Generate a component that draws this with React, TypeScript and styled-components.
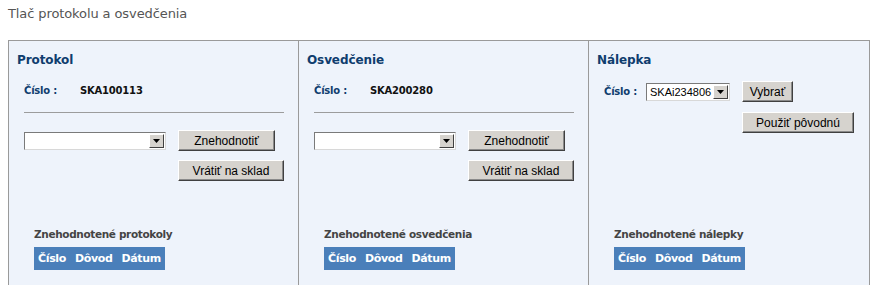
import React from "react";
import styled, { createGlobalStyle } from "styled-components";

const Global = createGlobalStyle`
  html, body { margin: 0; padding: 0; background: #ffffff; overflow: hidden; }
  body { padding: 6px 8px 0 8px; font-family: "DejaVu Sans", Verdana, sans-serif; }
`;

const Title = styled.div`
  font-size: 13px;
  color: #555555;
  height: 34px;
  line-height: 16px;
  letter-spacing: -0.1px;
`;

const Panel = styled.div`
  display: grid;
  grid-template-columns: 290px 290px 1fr;
  width: 862px;
  height: 245px;
  border: 1px solid #9a9a9a;
  border-bottom: none;
  background: #eef3fb;
  box-sizing: border-box;
`;

const Column = styled.div<{ $last?: boolean }>`
  position: relative;
  display: flex;
  flex-direction: column;
  padding: 11px 14px 0 8px;
  border-right: ${(p) => (p.$last ? "none" : "1px solid #9a9a9a")};
`;

const Heading = styled.div`
  font-size: 12px;
  font-weight: bold;
  color: #0f3d6e;
  line-height: 16px;
  letter-spacing: -0.1px;
  height: 30px;
`;

const NumberRow = styled.div`
  display: flex;
  align-items: center;
  padding-left: 7px;
  height: 16px;
  font-size: 10px;
  font-weight: bold;
  letter-spacing: -0.2px;
`;

const Label = styled.span`
  color: #0f3d6e;
  width: 56px;
`;

const Value = styled.span`
  color: #111111;
`;

const Rule = styled.div`
  margin: 14px 0 0 7px;
  height: 1px;
  background: #9c9c9c;
`;

const ActionsGrid = styled.div`
  display: grid;
  grid-template-columns: 142px auto;
  column-gap: 12px;
  row-gap: 9px;
  margin-top: 17px;
  padding-left: 7px;
  align-items: center;
`;

const Select = styled.div<{ $width: number }>`
  display: flex;
  width: ${(p) => p.$width}px;
  height: 18px;
  box-sizing: border-box;
  border: 1px solid;
  border-color: #7a7a7a #d8d8d8 #d8d8d8 #7a7a7a;
  background: #ffffff;
  font-family: "Liberation Sans", Arial, sans-serif;
  font-size: 11px;
  line-height: 16px;
  color: #000;
`;

const SelectText = styled.div`
  flex: 1;
  padding-left: 3px;
  overflow: hidden;
  white-space: nowrap;
`;

const Arrow = styled.div`
  width: 15px;
  height: 14px;
  margin: 1px;
  box-sizing: border-box;
  background: #d6d3ce;
  border: 1px solid;
  border-color: #ffffff #404040 #404040 #ffffff;
  display: flex;
  align-items: center;
  justify-content: center;
`;

const Button = styled.button<{ $width: number }>`
  width: ${(p) => p.$width}px;
  height: 21px;
  padding: 0;
  margin: 0;
  background: #d6d3ce;
  border: 1px solid;
  border-color: #ffffff #404040 #404040 #ffffff;
  box-shadow: inset -1px -1px 0 #8a8a8a;
  font-family: "Liberation Sans", Arial, sans-serif;
  font-size: 12px;
  color: #000;
  justify-self: start;
`;

const Spacer = styled.div``;

const Footer = styled.div`
  position: absolute;
  left: 25px;
  top: 186px;
`;

const SubTitle = styled.div`
  font-size: 10.5px;
  font-weight: bold;
  color: #444444;
  letter-spacing: -0.35px;
  line-height: 14px;
  margin-bottom: 6px;
`;

const HeaderRow = styled.div`
  display: inline-flex;
  gap: 9px;
  background: #4a7fba;
  padding: 0 4px;
  height: 23px;
  align-items: center;
  font-size: 11px;
  font-weight: bold;
  color: #ffffff;
  letter-spacing: -0.35px;
`;

const ArrowIcon = () => (
  <svg width="7" height="4" viewBox="0 0 7 4">
    <polygon points="0,0 7,0 3.5,4" fill="#000" />
  </svg>
);

const DropDown = ({ width, text }: { width: number; text?: string }) => (
  <Select $width={width}>
    <SelectText>{text}</SelectText>
    <Arrow>
      <ArrowIcon />
    </Arrow>
  </Select>
);

const Table = ({ title }: { title: string }) => (
  <Footer>
    <SubTitle>{title}</SubTitle>
    <HeaderRow>
      <span>Číslo</span>
      <span>Dôvod</span>
      <span>Dátum</span>
    </HeaderRow>
  </Footer>
);

const InvalidateColumn = ({
  heading,
  number,
  tableTitle,
}: {
  heading: string;
  number: string;
  tableTitle: string;
}) => (
  <Column>
    <Heading>{heading}</Heading>
    <NumberRow>
      <Label>Číslo :</Label>
      <Value>{number}</Value>
    </NumberRow>
    <Rule />
    <ActionsGrid>
      <DropDown width={142} />
      <Button $width={97}>Znehodnotiť</Button>
      <Spacer />
      <Button $width={106}>Vrátiť na sklad</Button>
    </ActionsGrid>
    <Table title={tableTitle} />
  </Column>
);

const StickerRow = styled.div`
  display: grid;
  grid-template-columns: 42px 96px auto;
  row-gap: 10px;
  padding-left: 7px;
  margin-top: -1px;
  align-items: center;
`;

const StickerLabel = styled.span`
  font-size: 10px;
  font-weight: bold;
  color: #0f3d6e;
  letter-spacing: -0.2px;
`;

export default function App() {
  return (
    <>
      <Global />
      <Title>Tlač protokolu a osvedčenia</Title>
      <Panel>
        <InvalidateColumn heading="Protokol" number="SKA100113" tableTitle="Znehodnotené protokoly" />
        <InvalidateColumn heading="Osvedčenie" number="SKA200280" tableTitle="Znehodnotené osvedčenia" />
        <Column $last>
          <Heading>Nálepka</Heading>
          <StickerRow>
            <StickerLabel>Číslo :</StickerLabel>
            <DropDown width={84} text="SKAi234806" />
            <Button $width={51}>Vybrať</Button>
            <Spacer />
            <Spacer />
            <Button $width={112}>Použiť pôvodnú</Button>
          </StickerRow>
          <Table title="Znehodnotené nálepky" />
        </Column>
      </Panel>
    </>
  );
}
